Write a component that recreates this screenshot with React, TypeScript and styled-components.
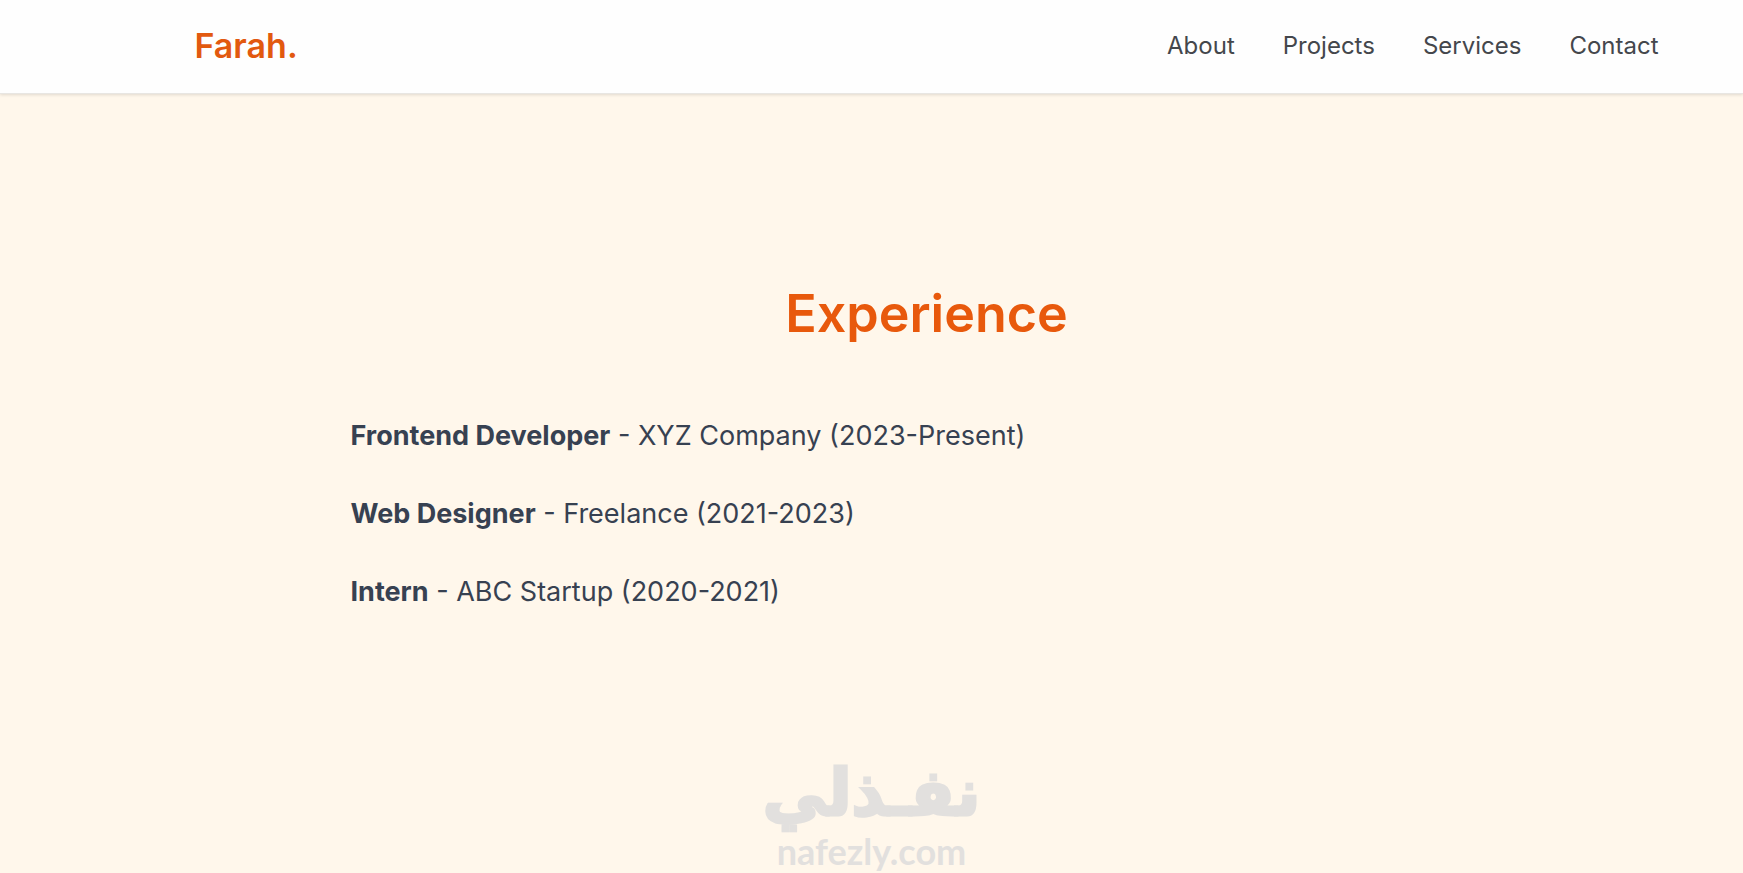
import React from "react";
import styled, { createGlobalStyle } from "styled-components";

const GlobalStyle = createGlobalStyle`
  * { box-sizing: border-box; }
  body {
    margin: 0;
    background: #fff7eb;
    color: #374151;
    font-family: "Inter", sans-serif;
  }
`;

const Page = styled.div`
  position: relative;
  min-height: 100vh;
  background: #fff7eb;
`;

const Header = styled.header`
  padding: 0 24px 0 134px;
  background: #fefefe;
  border-bottom: 1px solid #e8e6e2;
  box-shadow: 0 1px 3px rgba(0, 0, 0, 0.12);
`;

const HeaderInner = styled.div`
  display: flex;
  align-items: center;
  justify-content: space-between;
  max-width: 1464px;
  height: 93px;
  margin: 0 auto;
  padding-bottom: 2px;
`;

const Brand = styled.a`
  color: #e2590f;
  font-size: 34px;
  font-weight: 600;
  line-height: 48px;
  text-decoration: none;
`;

const Nav = styled.nav`
  display: flex;
  gap: 48px;
`;

const NavLink = styled.a`
  color: #44474c;
  font-size: 24px;
  line-height: 36px;
  text-decoration: none;
`;

const Section = styled.section`
  padding: 188px 24px 144px 134px;
`;

const SectionInner = styled.div`
  max-width: 1152px;
  margin: 0 auto;
`;

const Title = styled.h2`
  margin: 0 0 69px;
  color: #e8590c;
  font-size: 52px;
  font-weight: 600;
  line-height: 64px;
  text-align: center;
`;

const Jobs = styled.ul`
  display: flex;
  flex-direction: column;
  gap: 36px;
  margin: 0;
  padding: 0;
  list-style: none;
`;

const Job = styled.li`
  font-size: 27px;
  line-height: 42px;
`;

const Role = styled.strong`
  font-weight: 700;
`;

const Watermark = styled.div`
  position: absolute;
  left: 50%;
  bottom: 0;
  display: flex;
  flex-direction: column;
  align-items: center;
  transform: translateX(-50%);
  color: #e2e0de;
  font-weight: 700;
  pointer-events: none;
`;

const ArabicMark = styled.span`
  font-family: "DejaVu Sans", sans-serif;
  font-size: 64px;
  line-height: 72px;
  white-space: nowrap;
  -webkit-text-stroke: 3px #e2e0de;
`;

const LatinMark = styled.span`
  font-family: "Lato", sans-serif;
  font-size: 36px;
  line-height: 44px;
`;

const links = ["About", "Projects", "Services", "Contact"];

const jobs = [
  { role: "Frontend Developer", place: "XYZ Company (2023-Present)" },
  { role: "Web Designer", place: "Freelance (2021-2023)" },
  { role: "Intern", place: "ABC Startup (2020-2021)" },
];

export default function App() {
  return (
    <Page>
      <GlobalStyle />
      <Header>
        <HeaderInner>
          <Brand href="#top">Farah.</Brand>
          <Nav aria-label="Main">
            {links.map((label) => (
              <NavLink key={label} href={`#${label.toLowerCase()}`}>
                {label}
              </NavLink>
            ))}
          </Nav>
        </HeaderInner>
      </Header>
      <main>
        <Section>
          <SectionInner>
            <Title>Experience</Title>
            <Jobs>
              {jobs.map((job) => (
                <Job key={job.role}>
                  <Role>{job.role}</Role> - {job.place}
                </Job>
              ))}
            </Jobs>
          </SectionInner>
        </Section>
      </main>
      <Watermark>
        <ArabicMark lang="ar" dir="rtl">نفـذلي</ArabicMark>
        <LatinMark>nafezly.com</LatinMark>
      </Watermark>
    </Page>
  );
}
